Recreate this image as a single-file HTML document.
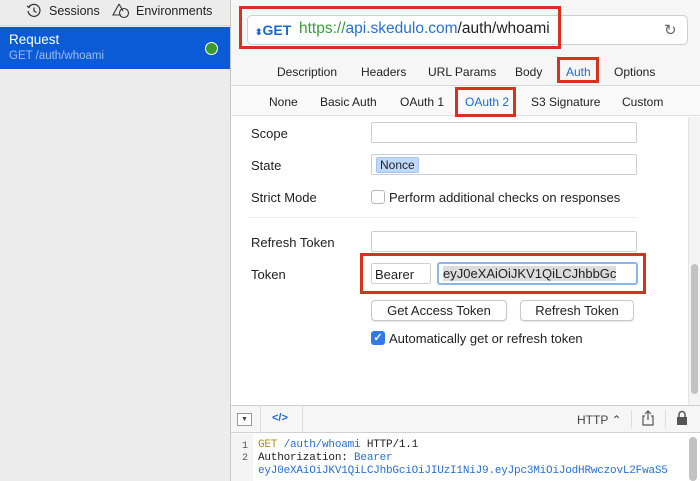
<!DOCTYPE html>
<html><head><style>
*{box-sizing:border-box;margin:0;padding:0}
body{width:700px;height:481px;overflow:hidden;font-family:"Liberation Sans",sans-serif;font-size:12px;color:#222;background:#fff;position:relative}
.a{position:absolute}
.red{position:absolute;border:3px solid #d8321f}
.inp{position:absolute;background:#fff;border:1px solid #cfcfcf;border-radius:2px}
.btn{position:absolute;background:#fff;border:1px solid #c8c8c8;border-radius:4px;font-size:13px;text-align:center;line-height:20px;box-shadow:0 1px 1px rgba(0,0,0,.1)}
.mono{font-family:"Liberation Mono",monospace;font-size:11px}
</style></head><body>
<div class="a" style="left:0;top:0;width:230px;height:481px;background:#ececec"></div>
<div class="a" style="left:0;top:0;width:230px;height:26px;border-bottom:1px solid #d6d6d6"></div>
<svg class="a" style="left:26px;top:3px" width="16" height="16" viewBox="0 0 16 16" fill="none" stroke="#333" stroke-width="1.2"><path d="M3 4A6 6 0 1 1 2 8"/><path d="M1 3l2 1.5L4.5 2"/><path d="M8 4.5V8l2.5 1.5"/></svg>
<div class="a" style="left:49px;top:4px;font-size:12.5px">Sessions</div>
<svg class="a" style="left:112px;top:2px" width="18" height="17" viewBox="0 0 18 17" fill="none" stroke="#333" stroke-width="1.1"><path d="M7 2L1 13h8"/><path d="M7 2l4 7"/><circle cx="12" cy="11" r="4.5"/></svg>
<div class="a" style="left:136px;top:4px;font-size:12.5px">Environments</div>
<div class="a" style="left:0;top:27px;width:230px;height:42px;background:#0c5bd6"></div>
<div class="a" style="left:9px;top:32px;color:#fff;font-size:13.5px">Request</div>
<div class="a" style="left:9px;top:50px;color:#9dbcf0;font-size:11.5px">GET /auth/whoami</div>
<div class="a" style="left:205px;top:42px;width:13px;height:13px;border-radius:50%;background:#3a9a32;border:1.5px solid #fff"></div>
<div class="a" style="left:230px;top:0;width:1px;height:481px;background:#c8c8c8"></div>
<div class="a" style="left:231px;top:0;width:469px;height:86px;background:#f6f6f6;border-bottom:1px solid #d6d6d6"></div>
<div class="inp" style="left:247px;top:15px;width:441px;height:30px;border-radius:5px"></div>
<div class="a" style="left:255px;top:22px;font-size:14px;color:#1a6ad6;font-weight:bold"><span style="font-size:9px">⬍</span>GET</div>
<div class="a" style="left:299px;top:20px;font-size:15.5px"><span style="color:#3b9a3b">https://</span><span style="color:#2a6fd4">api.skedulo.com</span><span style="color:#222">/auth/whoami</span></div>
<div class="a" style="left:664px;top:21px;font-size:15px;color:#666">↻</div>
<div class="red" style="left:239px;top:6px;width:322px;height:43px"></div>
<div class="a" style="left:277px;top:65px;font-size:12px">Description</div>
<div class="a" style="left:361px;top:65px">Headers</div>
<div class="a" style="left:428px;top:65px">URL Params</div>
<div class="a" style="left:515px;top:65px">Body</div>
<div class="a" style="left:566px;top:65px;color:#1a6ad6">Auth</div>
<div class="a" style="left:614px;top:65px">Options</div>
<div class="red" style="left:557px;top:57px;width:42px;height:26px"></div>
<div class="a" style="left:231px;top:87px;width:469px;height:29px;background:#f9f9f9;border-bottom:1px solid #e0e0e0"></div>
<div class="a" style="left:269px;top:95px">None</div>
<div class="a" style="left:320px;top:95px">Basic Auth</div>
<div class="a" style="left:400px;top:95px">OAuth 1</div>
<div class="a" style="left:465px;top:95px;color:#1a6ad6">OAuth 2</div>
<div class="a" style="left:531px;top:95px">S3 Signature</div>
<div class="a" style="left:622px;top:95px">Custom</div>
<div class="red" style="left:455px;top:87px;width:61px;height:30px"></div>
<div class="a" style="left:688px;top:117px;width:12px;height:288px;background:#f4f4f4;border-left:1px solid #e4e4e4"></div>
<div class="a" style="left:691px;top:264px;width:7px;height:130px;border-radius:4px;background:#c2c2c2"></div>
<div class="a" style="left:251px;top:126px;font-size:13px">Scope</div>
<div class="inp" style="left:371px;top:122px;width:266px;height:21px"></div>
<div class="a" style="left:251px;top:158px;font-size:13px">State</div>
<div class="inp" style="left:371px;top:154px;width:266px;height:21px"></div>
<div class="a" style="left:376px;top:157px;background:#bfd9fb;border:1px solid #a5c5f0;border-radius:2px;padding:0 3px;font-size:12px;line-height:14px">Nonce</div>
<div class="a" style="left:251px;top:190px;font-size:13px">Strict Mode</div>
<div class="a" style="left:371px;top:190px;width:14px;height:14px;border:1px solid #b8b8b8;border-radius:3px;background:#fff"></div>
<div class="a" style="left:389px;top:190px;font-size:13px">Perform additional checks on responses</div>
<div class="a" style="left:248px;top:217px;width:390px;height:1px;background:#eee"></div>
<div class="a" style="left:251px;top:235px;font-size:13px">Refresh Token</div>
<div class="inp" style="left:371px;top:231px;width:266px;height:21px"></div>
<div class="a" style="left:251px;top:267px;font-size:13px">Token</div>
<div class="inp" style="left:371px;top:263px;width:60px;height:21px;font-size:13px;padding:3px 0 0 3px">Bearer</div>
<div class="a" style="left:437px;top:262px;width:201px;height:23px;border:2px solid #8db4ee;border-radius:3px;background:#fff;font-size:13px;padding:2px 0 0 4px;overflow:hidden;white-space:nowrap"><span style="background:#dcdcdc">eyJ0eXAiOiJKV1QiLCJhbbGc</span></div>
<div class="red" style="left:360px;top:253px;width:286px;height:41px"></div>
<div class="btn" style="left:371px;top:300px;width:136px;height:21px">Get Access Token</div>
<div class="btn" style="left:520px;top:300px;width:114px;height:21px">Refresh Token</div>
<div class="a" style="left:371px;top:331px;width:14px;height:14px;border-radius:3px;background:#2f7ae5;color:#fff;font-size:11px;line-height:14px;text-align:center;font-weight:bold">✓</div>
<div class="a" style="left:389px;top:331px;font-size:13px">Automatically get or refresh token</div>
<div class="a" style="left:231px;top:405px;width:469px;height:28px;background:#f6f6f6;border-top:1px solid #d0d0d0;border-bottom:1px solid #d0d0d0"></div>
<div class="a" style="left:237px;top:413px;width:15px;height:13px;border:1px solid #999;background:#fff;font-size:7px;text-align:center;line-height:11px;color:#444">▼</div>
<div class="a" style="left:260px;top:406px;width:1px;height:26px;background:#ddd"></div>
<div class="a" style="left:272px;top:412px;color:#1a6ad6;font-weight:bold;font-size:11px">&lt;/&gt;</div>
<div class="a" style="left:302px;top:406px;width:1px;height:26px;background:#ddd"></div>
<div class="a" style="left:577px;top:413px;font-size:12px;color:#444">HTTP ⌃</div>
<div class="a" style="left:631px;top:410px;width:1px;height:18px;background:#ddd"></div>
<svg class="a" style="left:641px;top:410px" width="14" height="16" viewBox="0 0 14 16" fill="none" stroke="#555" stroke-width="1.2"><path d="M4 6H2v9h10V6h-2"/><path d="M7 1v9M4 4l3-3 3 3"/></svg>
<div class="a" style="left:665px;top:410px;width:1px;height:18px;background:#ddd"></div>
<svg class="a" style="left:676px;top:410px" width="12" height="15" viewBox="0 0 12 15"><path d="M3 7V4.5a3 3 0 0 1 6 0V7" fill="none" stroke="#555" stroke-width="1.5"/><rect x="1" y="7" width="10" height="8" fill="#555"/></svg>
<div class="a" style="left:231px;top:434px;width:22px;height:47px;background:#f4f4f4"></div>
<div class="a mono" style="left:242px;top:441px;color:#555;font-size:10px;line-height:12px">1<br>2</div>
<div class="a mono" style="left:258px;top:439px;line-height:13px;white-space:nowrap;letter-spacing:-0.2px"><span style="color:#b7861c">GET</span> <span style="color:#2a6fd4">/auth/whoami</span> HTTP/1.1<br>Authorization: <span style="color:#2a6fd4">Bearer</span><br><span style="color:#2a6fd4">eyJ0eXAiOiJKV1QiLCJhbGciOiJIUzI1NiJ9.eyJpc3MiOiJodHRwczovL2FwaS5</span></div>
<div class="a" style="left:689px;top:437px;width:8px;height:44px;border-radius:4px;background:#c2c2c2"></div>
</body></html>
